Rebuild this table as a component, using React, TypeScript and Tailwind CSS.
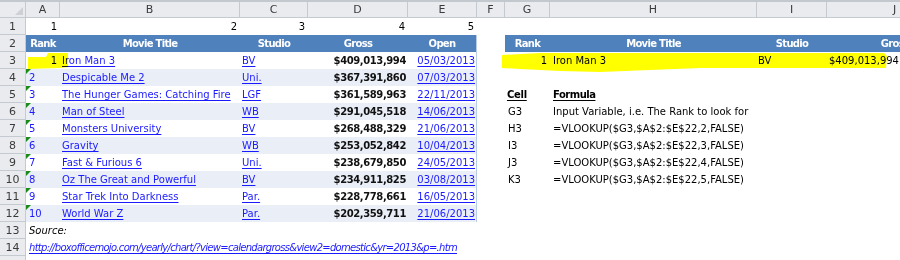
import React from 'react';

const movies = [
  { title: 'Iron Man 3', studio: 'BV', gross: '$409,013,994', open: '05/03/2013' },
  { title: 'Despicable Me 2', studio: 'Uni.', gross: '$367,391,860', open: '07/03/2013' },
  { title: 'The Hunger Games: Catching Fire', studio: 'LGF', gross: '$361,589,963', open: '22/11/2013' },
  { title: 'Man of Steel', studio: 'WB', gross: '$291,045,518', open: '14/06/2013' },
  { title: 'Monsters University', studio: 'BV', gross: '$268,488,329', open: '21/06/2013' },
  { title: 'Gravity', studio: 'WB', gross: '$253,052,842', open: '10/04/2013' },
  { title: 'Fast & Furious 6', studio: 'Uni.', gross: '$238,679,850', open: '24/05/2013' },
  { title: 'Oz The Great and Powerful', studio: 'BV', gross: '$234,911,825', open: '03/08/2013' },
  { title: 'Star Trek Into Darkness', studio: 'Par.', gross: '$228,778,661', open: '16/05/2013' },
  { title: 'World War Z', studio: 'Par.', gross: '$202,359,711', open: '21/06/2013' },
];

const formulas: [string, string][] = [
  ['G3', 'Input Variable, i.e. The Rank to look for'],
  ['H3', '=VLOOKUP($G3,$A$2:$E$22,2,FALSE)'],
  ['I3', '=VLOOKUP($G3,$A$2:$E$22,3,FALSE)'],
  ['J3', '=VLOOKUP($G3,$A$2:$E$22,4,FALSE)'],
  ['K3', '=VLOOKUP($G3,$A$2:$E$22,5,FALSE)'],
];

const colHeads: [string, string][] = [
  ['A', 'w-[34px]'],
  ['B', 'w-[180px]'],
  ['C', 'w-[68px]'],
  ['D', 'w-[100px]'],
  ['E', 'w-[69px]'],
  ['F', 'w-[28px]'],
  ['G', 'w-[45px]'],
  ['H', 'w-[207px]'],
  ['I', 'w-[70px]'],
  ['J', 'w-[136px]'],
];

const link = 'text-[#1a1aff] underline underline-offset-[2px]';
const thead = 'shrink-0 text-center font-bold text-white tracking-[-0.7px]';

function Row({ n, children }: { n: number; children?: React.ReactNode }) {
  return (
    <div className="flex h-[17px] shrink-0 leading-[17px]">
      <div className="w-[26px] shrink-0 border-r border-b border-[#c5cad1] bg-[#e9ebee] text-center text-[11px] text-[#3b3b3b]">
        {n}
      </div>
      {children}
    </div>
  );
}

function MovieRow({ i }: { i: number }) {
  const m = movies[i];
  const band = i % 2 === 1;
  return (
    <div className={`flex w-[451px] shrink-0 border-r border-[#b8cce4] ${band ? 'bg-[#e9eef7]' : 'bg-white'}`}>
      <div className={`relative w-[34px] shrink-0 ${i === 0 ? 'pr-[3px] text-right text-black' : 'pl-[3px] text-[#1a1aff]'}`}>
        {i > 0 && (
          <span className="absolute left-0 top-0 h-0 w-0 border-t-[5px] border-r-[5px] border-t-[#1b8a1b] border-r-transparent" />
        )}
        {i + 1}
      </div>
      <div className="w-[180px] shrink-0 whitespace-nowrap pl-[2px]">
        <span className={link}>{m.title}</span>
      </div>
      <div className="w-[68px] shrink-0 pl-[2px]">
        <span className={link}>{m.studio}</span>
      </div>
      <div className="w-[100px] shrink-0 pr-[2px] text-right font-bold tracking-[-0.4px] text-[#111]">{m.gross}</div>
      <div className="flex-1 pr-[1px] text-right">
        <span className={link}>{m.open}</span>
      </div>
    </div>
  );
}

function Blank() {
  return <div className="w-[451px] shrink-0" />;
}

export default function App() {
  return (
    <div className="relative h-[260px] w-[900px] overflow-hidden bg-white font-['DejaVu_Sans',sans-serif] text-[10px] text-black">
      {/* column letters */}
      <div className="flex h-[18px] border-t-2 border-[#c3c8cf]">
        <div className="relative w-[26px] shrink-0 border-r border-b border-[#c5cad1] bg-[#e9ebee]">
          <span className="absolute bottom-[2px] right-[2px] h-0 w-0 border-b-[8px] border-l-[8px] border-b-[#cdd0d5] border-l-transparent" />
        </div>
        {colHeads.map(([l, w]) => (
          <div
            key={l}
            className={`${w} shrink-0 border-r border-b border-[#c5cad1] bg-[#e9ebee] text-center text-[11px] leading-[15px] text-[#3b3b3b]`}
          >
            {l}
          </div>
        ))}
      </div>

      <Row n={1}>
        <div className="w-[34px] shrink-0 pr-[3px] text-right">1</div>
        <div className="w-[180px] shrink-0 pr-[3px] text-right">2</div>
        <div className="w-[68px] shrink-0 pr-[3px] text-right">3</div>
        <div className="w-[100px] shrink-0 pr-[3px] text-right">4</div>
        <div className="w-[69px] shrink-0 pr-[3px] text-right">5</div>
      </Row>

      <Row n={2}>
        <div className="flex w-[451px] shrink-0 border-r border-[#b8cce4] bg-[#4f81bd]">
          <div className={`w-[34px] ${thead}`}>Rank</div>
          <div className={`w-[180px] ${thead}`}>Movie Title</div>
          <div className={`w-[68px] ${thead}`}>Studio</div>
          <div className={`w-[100px] ${thead}`}>Gross</div>
          <div className={`flex-1 ${thead}`}>Open</div>
        </div>
        <div className="w-[28px] shrink-0" />
        <div className="flex shrink-0 bg-[#4f81bd]">
          <div className={`w-[45px] ${thead}`}>Rank</div>
          <div className={`w-[207px] ${thead}`}>Movie Title</div>
          <div className={`w-[70px] ${thead}`}>Studio</div>
          <div className={`w-[136px] ${thead}`}>Gross</div>
        </div>
      </Row>

      <Row n={3}>
        <MovieRow i={0} />
        <div className="w-[28px] shrink-0" />
        <div className="w-[45px] shrink-0 pr-[3px] text-right">1</div>
        <div className="w-[207px] shrink-0 pl-[3px]">Iron Man 3</div>
        <div className="w-[70px] shrink-0 pl-[1px]">BV</div>
        <div className="w-[136px] shrink-0 pl-[2px]">$409,013,994</div>
      </Row>

      <Row n={4}>
        <MovieRow i={1} />
      </Row>

      <Row n={5}>
        <MovieRow i={2} />
        <div className="w-[28px] shrink-0" />
        <div className="w-[45px] shrink-0 pl-[2px] font-bold tracking-[-0.3px]">
          <span className="underline underline-offset-[2px]">Cell</span>
        </div>
        <div className="w-[207px] shrink-0 pl-[3px] font-bold tracking-[-0.5px]">
          <span className="underline underline-offset-[2px]">Formula</span>
        </div>
      </Row>

      {formulas.map(([cell, text], k) => (
        <Row key={cell} n={6 + k}>
          <MovieRow i={3 + k} />
          <div className="w-[28px] shrink-0" />
          <div className="w-[45px] shrink-0 pl-[3px]">{cell}</div>
          <div className="w-[207px] shrink-0 whitespace-nowrap pl-[3px]">{text}</div>
        </Row>
      ))}

      <Row n={11}>
        <MovieRow i={8} />
      </Row>
      <Row n={12}>
        <MovieRow i={9} />
      </Row>

      <Row n={13}>
        <div className="w-[451px] shrink-0 pl-[3px] italic">Source:</div>
      </Row>
      <Row n={14}>
        <div className="w-[451px] shrink-0 whitespace-nowrap pl-[3px] italic tracking-[-0.7px]">
          <span className={link}>
            http://boxofficemojo.com/yearly/chart/?view=calendargross&amp;view2=domestic&amp;yr=2013&amp;p=.htm
          </span>
        </div>
      </Row>
      <Row n={15}>
        <Blank />
      </Row>

      {/* highlighter marks */}
      <svg
        className="pointer-events-none absolute left-0 top-0 mix-blend-multiply"
        width="900"
        height="260"
        viewBox="0 0 900 260"
      >
        <polygon points="28,57 46,57 48,53 68,53 68,67 60,68 28,69" fill="#ffff00" />
        <polygon
          points="502,55 540,53 700,53 884,53 887,56 886,68 700,68 650,70 600,72 560,71 520,69 502,68"
          fill="#ffff00"
        />
      </svg>
    </div>
  );
}
